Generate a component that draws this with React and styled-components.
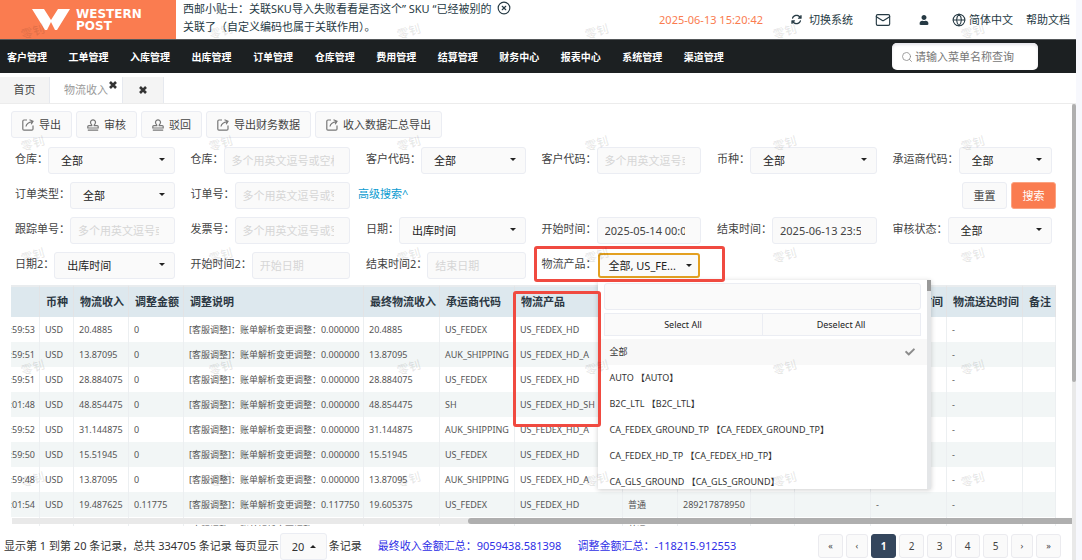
import React from "react";
import styled, { createGlobalStyle, css } from "styled-components";
import { FaUser, FaCheck } from "react-icons/fa";
import { FaArrowsRotate } from "react-icons/fa6";
import { Mail, Globe, CircleX, Search } from "lucide-react";

const FONT = '"Noto Sans", "Noto Sans CJK SC", sans-serif';

const GlobalStyle = createGlobalStyle`
  * { box-sizing: border-box; }
  body {
    margin: 0;
    background: #f7f8fd;
    font-family: ${FONT};
    font-size: 11px;
    line-height: 18px;
    color: #444;
  }
  button, input, select { font: inherit; color: inherit; margin: 0; }
`;

const Page = styled.div`
  position: relative;
  display: flex;
  flex-direction: column;
  height: 100vh;
  margin-right: 6px;
  background: #fff;
  overflow: hidden;
`;

/* ---------- top bar ---------- */
const Header = styled.header`
  display: flex;
  height: 39px;
  flex: none;
  color: #263a44;
`;

const Logo = styled.div`
  display: flex;
  align-items: center;
  gap: 6px;
  width: 176px;
  padding-left: 32px;
  background: #fa7c50;
  color: #fff;
  font: 700 12px/12px "DejaVu Sans", sans-serif;
`;

const Tip = styled.p`
  margin: 0;
  padding: 0 0 0 7px;
  white-space: nowrap;
  line-height: 18px;
`;

const IconButton = styled.button`
  display: inline-flex;
  align-items: center;
  gap: 7px;
  padding: 0;
  border: 0;
  background: none;
  white-space: nowrap;
  svg { display: block; flex: none; }
`;

const TipClose = styled(IconButton)`
  align-self: flex-start;
  margin-top: 1px;
  margin-left: 6px;
`;

const HeaderTools = styled.div`
  display: flex;
  align-items: center;
  margin-left: auto;
  padding-right: 6px;
`;

const Clock = styled.time`
  color: #fa7c50;
  margin-right: 28px;
`;

const ToolGroup = styled.div`
  display: flex;
  align-items: center;
  gap: ${(p) => p.$gap}px;
  margin-left: ${(p) => p.$before || 0}px;
`;

const HelpLink = styled.a`
  color: inherit;
  text-decoration: none;
`;

/* ---------- navigation ---------- */
const Nav = styled.nav`
  display: flex;
  align-items: center;
  justify-content: space-between;
  flex: none;
  height: 34px;
  padding: 0 38px 0 7px;
  border-top: 1px solid #55585a;
  background: #1c2022;
`;

const Menu = styled.ul`
  display: flex;
  justify-content: space-between;
  width: 717px;
  margin: 0;
  padding: 0;
  list-style: none;
  a {
    color: #fff;
    font-size: 10px;
    font-weight: 700;
    text-decoration: none;
    white-space: nowrap;
  }
`;

const MenuSearch = styled.label`
  display: flex;
  align-items: center;
  gap: 2px;
  width: 146px;
  height: 27px;
  padding-left: 9px;
  border-radius: 5px;
  background: #fff;
  box-shadow: inset 0 2px 3px #e4e4ea;
  color: #8a8a8a;
  svg { flex: none; }
  input {
    width: 100%;
    min-width: 0;
    padding: 0;
    border: 0;
    background: none;
    outline: 0;
  }
  input::placeholder { color: #777; }
`;

/* ---------- tabs ---------- */
const Tabs = styled.div`
  display: flex;
  flex: none;
  height: 31px;
  padding-top: 4px;
  border-bottom: 1px solid #ececec;
`;

const Tab = styled.div`
  display: flex;
  align-items: center;
  justify-content: center;
  width: ${(p) => p.$width}px;
  border-right: 1px solid #e6e9ef;
  background: ${(p) => (p.$active ? "#fff" : "#f4f4f4")};
  color: ${(p) => (p.$active ? "#999" : "#444")};
  ${(p) => p.$active && css`
    justify-content: flex-end;
    padding-right: 5px;
    gap: 1px;
    button { align-self: flex-start; margin-top: 4px; }
  `}
`;

const TabClose = styled(IconButton)`
  color: #333;
`;

/* ---------- working area ---------- */
const Work = styled.div`
  display: flex;
  flex: 1;
  min-height: 0;
`;

const Main = styled.main`
  display: flex;
  flex-direction: column;
  flex: 1;
  min-width: 0;
`;

const ScrollTrack = styled.div`
  width: 4px;
  background: #e9e9e9;
`;

const ScrollThumb = styled.div`
  height: 61%;
  border-radius: 2px;
  background: #afafaf;
`;

const Toolbar = styled.div`
  display: flex;
  gap: 4px;
  padding: 7px 11px 9px;
`;

const control = css`
  height: 27px;
  border: 1px solid #ebedf3;
  border-radius: 3px;
  background: #fafafa;
`;

const ToolButton = styled.button`
  ${control}
  display: flex;
  align-items: center;
  gap: 5px;
  padding: 0 10px;
  white-space: nowrap;
  svg { color: #777; }
`;

const Filters = styled.form`
  display: grid;
  grid-template-columns: repeat(6, 1fr);
  row-gap: 8px;
  padding: 0 12px 0 7px;
`;

const Field = styled.div`
  position: relative;
  display: flex;
  min-width: 0;
  padding: 0 8px;
  label { flex: none; line-height: 24px; white-space: nowrap; }
`;

const TextInput = styled.input`
  ${control}
  flex: 1;
  width: 0;
  min-width: 0;
  padding: 0 15px 0 7px;
  outline: 0;
  &::placeholder { color: #d6d6d6; }
`;

const SelectWrap = styled.div`
  position: relative;
  flex: 1;
  min-width: 0;
  select {
    ${control}
    display: block;
    width: 100%;
    padding: 0 20px 0 12px;
    appearance: none;
    outline: 0;
    color: #222;
  }
  svg {
    position: absolute;
    right: 10px;
    top: 11px;
    pointer-events: none;
  }
`;

const MultiSelect = styled.button`
  ${control}
  display: flex;
  flex: 1;
  align-items: center;
  justify-content: space-between;
  min-width: 0;
  margin: 1px;
  height: 25px;
  padding: 0 6px 0 9px;
  border: 2px solid #e3a021;
  color: #222;
  white-space: nowrap;
`;

const LinkCell = styled.div`
  a { color: #0a9bd0; text-decoration: none; line-height: 24px; }
`;

const Actions = styled.div`
  display: flex;
  justify-content: flex-end;
  gap: 4px;
  grid-column: 4 / 7;
  padding-right: 4px;
`;

const ActionButton = styled.button`
  ${control}
  width: 45px;
  padding: 0;
  ${(p) => p.$primary && css`
    border-color: #fba381;
    background: #fa7c50;
    color: #fff;
  `}
`;

const FieldMark = styled.div`
  position: absolute;
  z-index: 4;
  inset: -6px -16px -3px 0;
  border: 3px solid #f04a40;
  border-radius: 3px;
  pointer-events: none;
`;

/* ---------- product dropdown ---------- */
const Popup = styled.div`
  position: absolute;
  z-index: 3;
  top: 28px;
  left: 64px;
  display: flex;
  width: 333px;
  height: 209px;
  background: #fff;
  box-shadow: 0 1px 5px rgba(0, 0, 0, 0.2);
  font-size: 9px;
  overflow: hidden;
`;

const PopupBody = styled.div`
  flex: 1;
  min-width: 0;
`;

const PopupSearch = styled.input`
  ${control}
  display: block;
  width: 317px;
  margin: 3px 6px;
  outline: 0;
`;

const PopupButtons = styled.div`
  display: flex;
  margin: 0 6px 3px;
  button {
    flex: 1;
    height: 23px;
    padding: 0;
    border: 1px solid #ebedf3;
    background: #fafafa;
    color: #222;
  }
  button + button { border-left: 0; }
`;

const Options = styled.ul`
  margin: 0;
  padding: 0;
  list-style: none;
`;

const Option = styled.li`
  display: flex;
  align-items: center;
  justify-content: space-between;
  height: 26px;
  padding: 0 12px;
  background: ${(p) => (p.$selected ? "#f8f8f8" : "#fff")};
  color: #333;
  white-space: nowrap;
  svg { color: #8c8c8c; }
`;

const PopupTrack = styled.div`
  width: 4px;
  background: #e4e6e8;
`;

const PopupThumb = styled.div`
  height: 11px;
  background: #999;
`;

/* ---------- data table ---------- */
const TableArea = styled.div`
  position: relative;
  flex: 1;
  min-height: 0;
  margin-top: 6px;
  padding: 0 16px 0 11px;
  overflow: hidden;
`;

const Table = styled.table`
  width: 100%;
  table-layout: fixed;
  border-collapse: separate;
  border-spacing: 0;
  th {
    position: relative;
    height: 32px;
    padding: 0 0 0 6px;
    border-top: 2px solid #e9ecee;
    border-right: 1px solid #e2e3e5;
    background: #dde8ee;
    color: #2b3742;
    font-weight: 700;
    text-align: left;
    white-space: nowrap;
  }
  td {
    height: 25px;
    padding: 0 0 0 5px;
    border-right: 1px solid #eceff1;
    color: #555;
    font-size: 9px;
    white-space: nowrap;
  }
  tbody tr:nth-child(even) { background: #f2f6f6; }
`;

const TimeCell = styled.td`
  && { padding: 0 4px 0 0; }
  div { display: flex; justify-content: flex-end; overflow: hidden; }
`;

const ColumnMark = styled.div`
  position: absolute;
  z-index: 4;
  top: 4px;
  left: -2px;
  width: 88px;
  height: 136px;
  border: 3px solid #f04a40;
  border-radius: 3px;
  pointer-events: none;
`;

const HTrack = styled.div`
  position: absolute;
  left: 12px;
  right: 0;
  bottom: 2px;
  display: flex;
  justify-content: flex-end;
  height: 6px;
  background: #e9e9e9;
  div {
    width: 57%;
    border-radius: 3px 0 0 3px;
    background: #afafaf;
  }
`;

/* ---------- footer ---------- */
const Footer = styled.footer`
  display: flex;
  align-items: center;
  flex: none;
  height: 34px;
  padding: 5px 11px 0 4px;
  color: #333;
  white-space: nowrap;
`;

const PageSize = styled.div`
  position: relative;
  margin: 2px 2px 0 1px;
  select {
    ${control}
    display: block;
    width: 47px;
    padding: 0 0 0 11px;
    appearance: none;
  }
  svg { position: absolute; right: 11px; top: 12px; pointer-events: none; }
`;

const Total = styled.span`
  margin-left: 16px;
  color: #2f2fe6;
`;

const Pager = styled.div`
  display: flex;
  gap: 3px;
  margin-left: auto;
`;

const PageButton = styled.button`
  width: ${(p) => (p.$narrow ? 22 : 25)}px;
  height: 24px;
  padding: 0;
  border: 1px solid ${(p) => (p.$current ? "#34465d" : "#ebebef")};
  border-radius: 3px;
  background: ${(p) => (p.$current ? "#34465d" : "#fafafa")};
  color: ${(p) => (p.$current ? "#fff" : "#444")};
  font-size: ${(p) => (p.$arrow ? 9 : 10)}px;
  font-weight: ${(p) => (p.$current ? 700 : 400)};
`;

/* ---------- page watermark ---------- */
const Watermarks = styled.div`
  position: absolute;
  z-index: 5;
  inset: 0;
  display: grid;
  grid-template-columns: repeat(6, 188px);
  grid-auto-rows: 112px;
  padding: 23px 0 0 21px;
  overflow: hidden;
  pointer-events: none;
  span {
    justify-self: start;
    align-self: start;
    color: rgba(0, 0, 0, 0.09);
    font-size: 12px;
    font-weight: 700;
    transform: rotate(-16deg);
  }
`;

/* ---------- drawings ---------- */
const WLogo = () => (
  <svg width="38" height="22" viewBox="0 0 38 22" fill="#fff" aria-hidden="true">
    <path d="M0 0H12L19 11L26 0H38L25 21H23L19 13L15 21H13Z" />
  </svg>
);
const Caret = ({ up }) => (
  <svg width="6" height="3" viewBox="0 0 6 3" fill="#222" aria-hidden="true">
    <path d={up ? "M0 3L3 0L6 3Z" : "M0 0L3 3L6 0Z"} />
  </svg>
);
const Cross = () => (
  <svg width="8" height="8" viewBox="0 0 8 8" fill="none" stroke="currentColor" strokeWidth="2.6" aria-hidden="true">
    <path d="M1 1L7 7M7 1L1 7" />
  </svg>
);
const ExportIcon = () => (
  <svg width="12" height="12" viewBox="0 0 12 12" fill="none" stroke="currentColor" strokeWidth="1.2" aria-hidden="true">
    <path d="M5 1H2Q.8 1 .8 2.2V10Q.8 11.2 2 11.2H9.8Q11 11.2 11 10V6.5M4 7.5Q4.5 3.8 10.5 2.5M7.5 .8L11 2.2L9.2 5.2" />
  </svg>
);
const StampIcon = () => (
  <svg width="12" height="12" viewBox="0 0 12 12" fill="none" stroke="currentColor" strokeWidth="1.2" aria-hidden="true">
    <path d="M4.8 6.6Q4.8 5.6 4 4.8Q3 3.2 4 1.8Q6 -.2 8 1.8Q9 3.2 8 4.8Q7.2 5.6 7.2 6.6H10.2Q11.2 6.6 11.2 7.6V9H.8V7.6Q.8 6.6 1.8 6.6ZM.8 11.2H11.2" />
  </svg>
);

const menu = ["客户管理", "工单管理", "入库管理", "出库管理", "订单管理", "仓库管理", "费用管理", "结算管理", "财务中心", "报表中心", "系统管理", "渠道管理"];

const tools = [
  ["导出", ExportIcon], ["审核", StampIcon], ["驳回", StampIcon],
  ["导出财务数据", ExportIcon], ["收入数据汇总导出", ExportIcon],
];

const MULTI = "多个用英文逗号或空格隔开";

const options = [
  "全部", "AUTO 【AUTO】", "B2C_LTL 【B2C_LTL】", "CA_FEDEX_GROUND_TP 【CA_FEDEX_GROUND_TP】",
  "CA_FEDEX_HD_TP 【CA_FEDEX_HD_TP】", "CA_GLS_GROUND 【CA_GLS_GROUND】",
];

const PRODUCT = "物流产品";

const columns = [
  ["", 29], ["币种", 34], ["物流收入", 55], ["调整金额", 55], ["调整说明", 180],
  ["最终物流收入", 76], ["承运商代码", 75], [PRODUCT, 108], ["订单类型", 55],
  ["跟踪单号", 73], ["邮编", 44], ["出库时间", 76], ["物流上网时间", 76],
  ["物流送达时间", 76], ["备注", 33],
];

const rows = [
  ["15:59:53", "20.4885", "0", "0.000000", "20.4885", "US_FEDEX", "US_FEDEX_HD", "289217879012"],
  ["15:59:51", "13.87095", "0", "0.000000", "13.87095", "AUK_SHIPPING", "US_FEDEX_HD_A", "289217879001"],
  ["15:59:51", "28.884075", "0", "0.000000", "28.884075", "US_FEDEX", "US_FEDEX_HD", "289217878994"],
  ["16:01:48", "48.854475", "0", "0.000000", "48.854475", "SH", "US_FEDEX_HD_SH", "289217878983"],
  ["15:59:52", "31.144875", "0", "0.000000", "31.144875", "AUK_SHIPPING", "US_FEDEX_HD_A", "289217878972"],
  ["15:59:50", "15.51945", "0", "0.000000", "15.51945", "US_FEDEX", "US_FEDEX_HD", "289217878961"],
  ["15:59:48", "13.87095", "0", "0.000000", "13.87095", "AUK_SHIPPING", "US_FEDEX_HD_A", "289217878955"],
  ["16:01:54", "19.487625", "0.11775", "0.117750", "19.605375", "US_FEDEX", "US_FEDEX_HD", "289217878950"],
  ["15:59:53", "9.77325", "0", "0.000000", "9.77325", "AUK_SHIPPING", "US_FEDEX_GROUND_A", "281178589630"],
];

const SelectField = ({ id, label, value = "全部" }) => (
  <Field>
    <label htmlFor={id}>{label}：</label>
    <SelectWrap>
      <select id={id} defaultValue={value}><option>{value}</option></select>
      <Caret />
    </SelectWrap>
  </Field>
);

const InputField = ({ id, label, placeholder, value }) => (
  <Field>
    <label htmlFor={id}>{label}：</label>
    <TextInput id={id} placeholder={placeholder} defaultValue={value} />
  </Field>
);

const ProductField = () => (
  <Field>
    <label htmlFor="product">{PRODUCT}：</label>
    <MultiSelect id="product" type="button" aria-haspopup="listbox" aria-expanded="true">
      全部, US_FE...
      <Caret />
    </MultiSelect>
    <FieldMark />
    <Popup>
      <PopupBody>
        <PopupSearch aria-label="搜索物流产品" />
        <PopupButtons>
          <button type="button">Select All</button>
          <button type="button">Deselect All</button>
        </PopupButtons>
        <Options role="listbox" aria-label={PRODUCT}>
          {options.map((o, i) => (
            <Option key={o} role="option" aria-selected={i === 0} $selected={i === 0}>
              {o}
              {i === 0 && <FaCheck size={10} />}
            </Option>
          ))}
        </Options>
      </PopupBody>
      <PopupTrack><PopupThumb /></PopupTrack>
    </Popup>
  </Field>
);

export default function App() {
  return (
    <>
      <GlobalStyle />
      <Page>
        <Header>
          <Logo><WLogo /><span>WESTERN<br />POST</span></Logo>
          <Tip>
            西邮小贴士：关联SKU导入失败看看是否这个” SKU “已经被别的<br />
            关联了（自定义编码也属于关联作用）。
          </Tip>
          <TipClose aria-label="关闭"><CircleX size={14} /></TipClose>
          <HeaderTools>
            <Clock>2025-06-13 15:20:42</Clock>
            <ToolGroup $gap={22}>
              <IconButton><FaArrowsRotate size={11} />切换系统</IconButton>
              <IconButton aria-label="邮件"><Mail size={16} strokeWidth={1.7} /></IconButton>
            </ToolGroup>
            <ToolGroup $gap={23} $before={28}>
              <IconButton aria-label="用户"><FaUser size={10} /></IconButton>
              <ToolGroup $gap={13}>
                <ToolGroup $gap={3}>
                  <Globe size={14} strokeWidth={1.8} />
                  <IconButton>简体中文</IconButton>
                </ToolGroup>
                <HelpLink href="#help">帮助文档</HelpLink>
              </ToolGroup>
            </ToolGroup>
          </HeaderTools>
        </Header>

        <Nav>
          <Menu>{menu.map((m) => <li key={m}><a href="#menu">{m}</a></li>)}</Menu>
          <MenuSearch>
            <Search size={12} strokeWidth={1.6} />
            <input aria-label="菜单查询" placeholder="请输入菜单名称查询" />
          </MenuSearch>
        </Nav>

        <Tabs>
          <Tab $width={50}>首页</Tab>
          <Tab $width={73} $active>物流收入<TabClose aria-label="关闭"><Cross /></TabClose></Tab>
          <Tab $width={41}><TabClose aria-label="关闭"><Cross /></TabClose></Tab>
        </Tabs>

        <Work>
          <Main>
            <Toolbar>
              {tools.map(([name, Icon]) => <ToolButton key={name}><Icon />{name}</ToolButton>)}
            </Toolbar>
            <Filters>
              <SelectField id="wh" label="仓库" />
              <InputField id="whs" label="仓库" placeholder={MULTI} />
              <SelectField id="cust" label="客户代码" />
              <InputField id="custs" label="客户代码" placeholder={MULTI} />
              <SelectField id="cur" label="币种" />
              <SelectField id="carrier" label="承运商代码" />

              <SelectField id="otype" label="订单类型" />
              <InputField id="ono" label="订单号" placeholder={MULTI} />
              <LinkCell><a href="#advanced">高级搜索^</a></LinkCell>
              <Actions>
                <ActionButton type="reset">重置</ActionButton>
                <ActionButton type="button" $primary>搜索</ActionButton>
              </Actions>

              <InputField id="track" label="跟踪单号" placeholder={MULTI} />
              <InputField id="inv" label="发票号" placeholder={MULTI} />
              <SelectField id="date" label="日期" value="出库时间" />
              <InputField id="start" label="开始时间" value="2025-05-14 00:00:00" />
              <InputField id="end" label="结束时间" value="2025-06-13 23:59:59" />
              <SelectField id="audit" label="审核状态" />

              <SelectField id="date2" label="日期2" value="出库时间" />
              <InputField id="start2" label="开始时间2" placeholder="开始日期" />
              <InputField id="end2" label="结束时间2" placeholder="结束日期" />
              <ProductField />
            </Filters>

            <TableArea>
              <Table>
                <colgroup>{columns.map(([n, w], i) => <col key={i} width={w} />)}</colgroup>
                <thead>
                  <tr>
                    {columns.map(([n], i) => (
                      <th key={i} scope="col">{n}{n === PRODUCT && <ColumnMark />}</th>
                    ))}
                  </tr>
                </thead>
                <tbody>
                  {rows.map((r, i) => (
                    <tr key={i}>
                      <TimeCell><div>{r[0]}</div></TimeCell>
                      <td>USD</td>
                      <td>{r[1]}</td>
                      <td>{r[2]}</td>
                      <td>[客服调整]：账单解析变更调整：{r[3]}</td>
                      <td>{r[4]}</td>
                      <td>{r[5]}</td>
                      <td>{r[6]}</td>
                      <td>普通</td>
                      <td>{r[7]}</td>
                      <td />
                      <td />
                      <td>-</td>
                      <td>-</td>
                      <td />
                    </tr>
                  ))}
                </tbody>
              </Table>
              <HTrack><div /></HTrack>
            </TableArea>

            <Footer>
              显示第 1 到第 20 条记录，总共 334705 条记录 每页显示
              <PageSize>
                <select aria-label="每页显示" defaultValue="20"><option>20</option></select>
                <Caret up />
              </PageSize>
              条记录
              <Total>最终收入金额汇总：9059438.581398</Total>
              <Total>调整金额汇总：-118215.912553</Total>
              <Pager>
                <PageButton $arrow>«</PageButton>
                <PageButton $arrow $narrow>‹</PageButton>
                <PageButton $current>1</PageButton>
                {[2, 3, 4, 5].map((n) => <PageButton key={n}>{n}</PageButton>)}
                <PageButton $arrow $narrow>›</PageButton>
                <PageButton $arrow>»</PageButton>
              </Pager>
            </Footer>
          </Main>
          <ScrollTrack><ScrollThumb /></ScrollTrack>
        </Work>

        <Watermarks aria-hidden="true">
          {Array.from({ length: 30 }, (_, i) => <span key={i}>零钊</span>)}
        </Watermarks>
      </Page>
    </>
  );
}
